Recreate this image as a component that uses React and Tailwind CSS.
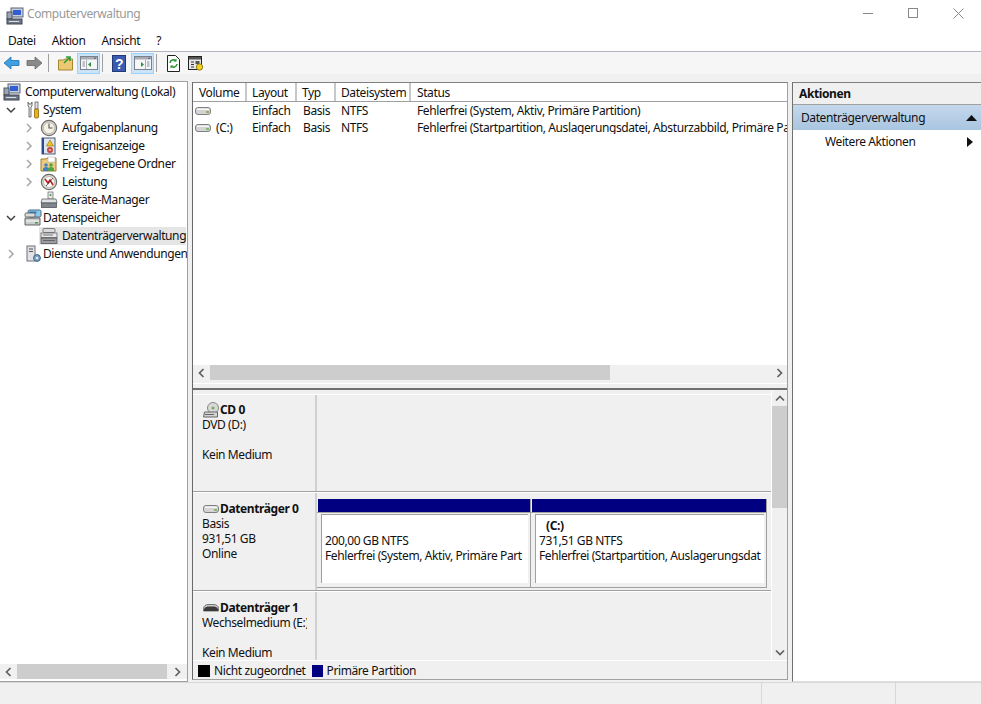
import React from "react";

const Chev = ({ down }) => (
  <svg width="10" height="10" viewBox="0 0 10 10" className="shrink-0">
    {down ? (
      <path d="M1 3l4 4 4-4" fill="none" stroke="#404040" strokeWidth="1.5" />
    ) : (
      <path d="M3 1l4 4-4 4" fill="none" stroke="#a6a6a6" strokeWidth="1.5" />
    )}
  </svg>
);

const CompIcon = () => (
  <svg width="18" height="18" viewBox="0 0 18 18">
    <rect x="5" y="1" width="12" height="9" fill="#c8d0dc" stroke="#5a6478" />
    <rect x="7" y="3" width="8" height="5" fill="#2f5fd0" />
    <rect x="1" y="5" width="5" height="7" fill="#9aa4b4" stroke="#4a5466" />
    <rect x="1" y="12" width="15" height="5" fill="#6e7886" stroke="#3c4450" />
    <path d="M3 14.5h10" stroke="#d8dce2" />
  </svg>
);
const ToolsIcon = () => (
  <svg width="18" height="18" viewBox="0 0 18 18">
    <path d="M4 1v4l1 1v10h2V6l1-1V1L7 3H5z" fill="#e6e6e6" stroke="#555" strokeWidth=".8" />
    <rect x="11" y="1" width="3" height="7" fill="#e0e0e0" stroke="#555" strokeWidth=".7" />
    <rect x="10.5" y="8" width="4" height="9" rx="1" fill="#eeb014" stroke="#7a5a00" strokeWidth=".7" />
  </svg>
);
const ClockIcon = () => (
  <svg width="18" height="18" viewBox="0 0 18 18">
    <circle cx="9" cy="9" r="7.6" fill="#d8d4c8" stroke="#707070" strokeWidth="1.2" />
    <circle cx="9" cy="9" r="5.6" fill="#f4f1e6" stroke="#a8a8a0" strokeWidth=".6" />
    <path d="M9 4.5V9h3.5" fill="none" stroke="#555" strokeWidth="1.1" />
  </svg>
);
const EventIcon = () => (
  <svg width="18" height="18" viewBox="0 0 18 18">
    <rect x="2" y="1" width="13" height="16" fill="#dfe5f0" stroke="#4a5878" />
    <path d="M3 1v16" stroke="#2c4a8c" strokeWidth="2" />
    <path d="M10 3l3.5 6h-7z" fill="#f2c420" stroke="#8a6a00" strokeWidth=".6" />
    <circle cx="10" cy="13" r="3" fill="#c8423c" />
    <path d="M8.8 13h2.4" stroke="#fff" />
  </svg>
);
const ShareIcon = () => (
  <svg width="18" height="18" viewBox="0 0 18 18">
    <path d="M1 4h5l1-1h9v13H1z" fill="#eccb7c" stroke="#a07c30" />
    <rect x="8" y="2" width="7" height="5" fill="#fff" stroke="#aaa" strokeWidth=".5" />
    <circle cx="6" cy="10" r="1.8" fill="#3f7fc4" />
    <path d="M3 16v-2c0-1 1-2 3-2s3 1 3 2v2z" fill="#3f7fc4" />
    <circle cx="11" cy="10" r="1.8" fill="#4ea24e" />
    <path d="M8 16v-2c0-1 1-2 3-2s3 1 3 2v2z" fill="#4ea24e" />
  </svg>
);
const PerfIcon = () => (
  <svg width="18" height="18" viewBox="0 0 18 18">
    <circle cx="9" cy="9" r="7.6" fill="#e2ddd0" stroke="#6c6c6c" strokeWidth="1.2" />
    <circle cx="9" cy="9" r="5.4" fill="#fff" stroke="#999" strokeWidth=".6" />
    <path d="M5 6l3 4 2-3 3 5" fill="none" stroke="#c4201c" strokeWidth="1.6" />
    <path d="M6 13l7-8" stroke="#333" strokeWidth=".8" />
  </svg>
);
const DevIcon = () => (
  <svg width="18" height="18" viewBox="0 0 18 18">
    <rect x="8" y="1" width="5" height="7" fill="#e8e8e8" stroke="#777" strokeWidth=".8" />
    <circle cx="10.5" cy="4" r="1" fill="#3d9a4a" />
    <path d="M2 8h14l1 4H1z" fill="#e0e2e4" stroke="#666" strokeWidth=".8" />
    <rect x="1.5" y="12" width="15" height="4.5" fill="#7e8690" stroke="#555" strokeWidth=".8" />
  </svg>
);
const StoreIcon = () => (
  <svg width="18" height="18" viewBox="0 0 18 18">
    <rect x="4" y="1" width="13" height="7" rx="1.5" fill="#8fc8e8" stroke="#4a6a80" />
    <rect x="5.5" y="2.5" width="7" height="2" fill="#2e7fc0" />
    <rect x="1" y="4" width="10" height="4" rx="1" fill="#d8dcdc" stroke="#555" strokeWidth=".8" />
    <path d="M1 9h15v7H1z" fill="#c9cdcb" stroke="#555" strokeWidth=".9" />
    <path d="M2 12h13" stroke="#fafafa" />
    <rect x="11" y="13" width="3" height="1.6" fill="#4ea24e" />
  </svg>
);
const DiskMgmtIcon = () => (
  <svg width="18" height="18" viewBox="0 0 18 18">
    <rect x="3" y="1.5" width="12" height="4" rx="1" fill="#dadada" stroke="#666" strokeWidth=".8" />
    <rect x="1" y="6" width="16" height="4.5" fill="#e8e8e8" stroke="#666" strokeWidth=".8" />
    <rect x="1" y="11" width="16" height="5.5" fill="#9a9ea2" stroke="#555" strokeWidth=".8" />
    <path d="M3 8h10M3 13.5h12" stroke="#555" strokeWidth=".8" />
  </svg>
);
const ServiceIcon = () => (
  <svg width="18" height="18" viewBox="0 0 18 18">
    <rect x="3" y="1" width="8" height="15" fill="#e0e2e6" stroke="#6c7078" />
    <path d="M5 4h4M5 6.5h4" stroke="#555" />
    <circle cx="13" cy="13" r="3.4" fill="#7da6cc" stroke="#3f5f80" />
    <circle cx="13" cy="13" r="1.1" fill="#fff" />
  </svg>
);

const Drive = ({ dark }) =>
  dark ? (
    <svg width="16" height="8" viewBox="0 0 16 8" className="shrink-0">
      <path d="M.5 7V4.5C.5 2 3 .5 5 .5h6c2 0 4.500 1.500 4.500 4V7z" fill="#c8c8c8" stroke="#777" />
      <path d="M1 7V5c1-2 3-2.500 5-2.500h4c2 0 4 .5 5 2.500v2z" fill="#3c3c3c" />
    </svg>
  ) : (
    <svg width="16" height="8" viewBox="0 0 16 8" className="shrink-0">
      <rect x=".5" y=".5" width="15" height="7" rx="2.500" fill="#d4d4d4" stroke="#808080" />
      <rect x="2" y="1.500" width="12" height="1.500" fill="#f4f4f4" />
      <rect x="11" y="4" width="3" height="2" fill="#8ab474" />
    </svg>
  );
const CdIcon = () => (
  <svg width="16" height="16" viewBox="0 0 16 16" className="shrink-0">
    <circle cx="10" cy="6" r="5.500" fill="#d8d8d8" stroke="#888" />
    <circle cx="10" cy="6" r="1.500" fill="#6fae5e" />
    <path d="M1.500 10h13v5H.5z" fill="#d4d4d4" stroke="#666" />
    <path d="M2 12.500h9" stroke="#666" />
  </svg>
);

const TreeRow = ({ depth, chev, icon, label, selected }) => {
  if (depth === 2) {
    return (
      <div className="flex h-[18px] items-center whitespace-nowrap">
        <div className="w-[39px] shrink-0 flex justify-end pr-[5px]">{chev ? <Chev /> : null}</div>
        <div className={selected ? "flex-1 h-full flex items-center bg-[#e5e5e5] pl-[1px] mr-[1px]" : "flex-1 h-full flex items-center pl-[1px]"}>
          <div className="w-[22px] shrink-0 flex">{icon}</div>
          <span>{label}</span>
        </div>
      </div>
    );
  }
  if (depth === 1) {
    return (
      <div className="flex h-[18px] items-center whitespace-nowrap pl-[6px]">
        <div className="w-[14px] shrink-0 flex">{chev === "down" ? <Chev down /> : <Chev />}</div>
        <div className="w-[4px] shrink-0" />
        <div className="w-[19px] shrink-0 flex">{icon}</div>
        <span>{label}</span>
      </div>
    );
  }
  return (
    <div className="flex h-[18px] items-center whitespace-nowrap pl-[3px]">
      <div className="w-[22px] shrink-0 flex">{icon}</div>
      <span>{label}</span>
    </div>
  );
};

const Hd = ({ w, children, pl }) => (
  <div className={`${w} h-full shrink-0 flex items-center pt-[1px] ${pl} border-r-2 border-[#c8c8c8]`}>{children}</div>
);

const VolRow = ({ vol, status }) => (
  <div className="flex h-[16.5px] items-center whitespace-nowrap">
    <div className="w-[59px] pl-[2px] shrink-0 flex items-center gap-[5px]"><Drive /><span>{vol}</span></div>
    <div className="w-[51px] shrink-0">Einfach</div>
    <div className="w-[38px] shrink-0">Basis</div>
    <div className="w-[76px] shrink-0">NTFS</div>
    <div className="flex-1 overflow-hidden">{status}</div>
  </div>
);

const Arrow = ({ dir }) => {
  const d = { l: "M6.500 1L2.500 5l4 4", r: "M3.500 1l4 4-4 4", u: "M1 6.500l4-4 4 4", d: "M1 3.500l4 4 4-4" }[dir];
  return (
    <svg width="10" height="10" viewBox="0 0 10 10"><path d={d} fill="none" stroke="#606060" strokeWidth="1.7" /></svg>
  );
};

const Partition = ({ w, bold, size, status }) => (
  <div className={`${w} shrink-0 h-[89px] border-r border-b border-[#a0a0a0] flex flex-col`}>
    <div className="h-[13px] bg-[#000080] shrink-0 ml-[1px]" />
    <div className="h-px bg-[#a0a0a0] shrink-0" />
    <div className="flex-1 pl-[4px] pt-[1px] pr-[2px]">
      <div className="h-[69px] bg-white border-l border-t border-[#a0a0a0] pl-[3px] leading-[15px] whitespace-nowrap overflow-hidden">
        <div className="h-[3px]" />
        <div className="h-[15px] pl-[7px] font-bold">{bold}</div>
        <div>{size}</div>
        <div>{status}</div>
      </div>
    </div>
  </div>
);

const DiskLabel = ({ icon, name, lines, top }) => (
  <div className={`w-[124px] shrink-0 pl-[9px] ${top} leading-[15px] whitespace-nowrap overflow-hidden border-r-2 border-[#d0d0d0] pr-[8px]`}>
    <div className="flex items-center h-[15px] font-bold ml-[1px]">{icon}<span className="ml-[1px]">{name}</span></div>
    {lines.map((l, i) => (
      <div key={i} className="h-[15px] overflow-hidden">{l}</div>
    ))}
  </div>
);

const Pressed = ({ children }) => (
  <div className="w-[23px] h-[21px] bg-[#cce4f7] border border-[#99d1ff] flex items-center justify-center">{children}</div>
);
const Sep = () => <div className="w-px h-[18px] bg-[#a0a0a0]" />;

const PaneBtn = ({ side }) => (
  <svg width="18" height="14" viewBox="0 0 18 14">
    <rect x=".5" y=".5" width="17" height="13" fill="#f4f6f8" stroke="#7c8088" />
    <rect x="1" y="1" width="16" height="2.500" fill="#a8acb4" />
    <path d="M14 2.200h2" stroke="#555" />
    {side === "l" ? (
      <>
        <path d="M6.500 4v9" stroke="#a8acb4" />
        <path d="M2.500 6h2.500M2.500 8h2.500M2.500 10h2.500" stroke="#8a9098" />
        <path d="M11 6v5l-3-2.500z" fill="#2f8f3a" />
      </>
    ) : (
      <>
        <path d="M11.500 4v9" stroke="#a8acb4" />
        <path d="M13 6h2.500M13 8h2.500M13 10h2.500" stroke="#8a9098" />
        <path d="M7 6v5l3-2.500z" fill="#2f8f3a" />
      </>
    )}
  </svg>
);

export default function App() {
  return (
    <div className="w-[981px] h-[704px] overflow-hidden bg-[#f0f0f0] flex flex-col text-[12px] tracking-[-0.4px] text-[#111] font-['Noto_Sans',sans-serif] leading-none">
      {/* title bar */}
      <div className="h-[31px] bg-white flex items-center shrink-0">
        <div className="pl-[6px] pr-[3px] flex"><CompIcon /></div>
        <span className="text-[#999] text-[12px] -mt-[3px]">Computerverwaltung</span>
        <div className="ml-auto flex items-center -mt-[5px] pr-[17px] gap-[35px]">
          <div className="w-[10px] h-px bg-[#888]" />
          <div className="w-[10px] h-[10px] border border-[#888]" />
          <svg width="11" height="11" viewBox="0 0 11 11"><path d="M.5.5l10 10M10.500.5l-10 10" stroke="#888" /></svg>
        </div>
      </div>
      {/* menu */}
      <div className="h-[21px] bg-white border-b border-[#b4b4bc] flex items-center pl-[8px] gap-[16px] shrink-0">
        <span>Datei</span><span>Aktion</span><span>Ansicht</span><span>?</span>
      </div>
      {/* toolbar */}
      <div className="h-[22px] bg-[#f6f6f7] flex items-center shrink-0 pl-[3px]">
        <svg width="17" height="14" viewBox="0 0 17 14"><path d="M8 1L1 7l7 6V9.500h8v-5H8z" fill="#3f9fe0" stroke="#1f6fb0" strokeWidth=".8" /></svg>
        <div className="w-[6px]" />
        <svg width="17" height="14" viewBox="0 0 17 14"><path d="M9 1l7 6-7 6V9.500H1v-5h8z" fill="#8a8a8a" stroke="#666" strokeWidth=".8" /></svg>
        <div className="w-[5px]" /><Sep /><div className="w-[9px]" />
        <svg width="15" height="16" viewBox="0 0 15 16"><path d="M.5 5h5l1-1h8v11H.5z" fill="#ecc870" stroke="#a68430" /><path d="M6 8l5-5M8 2h4v4" fill="none" stroke="#2e9a3a" strokeWidth="1.600" /></svg>
        <div className="w-[4px]" />
        <Pressed><PaneBtn side="l" /></Pressed>
        <div className="w-[2px]" /><Sep /><div className="w-[9px]" />
        <svg width="14" height="17" viewBox="0 0 14 17"><rect x=".5" y=".5" width="13" height="16" fill="#3a5bb0" stroke="#24397a" /><text x="7" y="13.500" textAnchor="middle" fontSize="14" fontWeight="700" fill="#fff" fontFamily="Liberation Sans">?</text></svg>
        <div className="w-[5px]" />
        <Pressed><PaneBtn side="r" /></Pressed>
        <div className="w-[2px]" /><Sep /><div className="w-[9px]" />
        <svg width="15" height="17" viewBox="0 0 15 17"><path d="M1.500.5h8l4 4v12h-12z" fill="#fff" stroke="#222" /><path d="M4 8a3.500 3.500 0 016-2M11 9a3.500 3.500 0 01-6 2" fill="none" stroke="#2e9a3a" strokeWidth="1.600" /><path d="M10.500 3.500v3h-3M4.500 13.500v-3h3" fill="#2e9a3a" /></svg>
        <div className="w-[7px]" />
        <svg width="16" height="17" viewBox="0 0 16 17"><rect x=".5" y="1.500" width="13" height="13" fill="#e8e8e8" stroke="#222" /><rect x="1" y="2" width="12" height="2.500" fill="#555" /><path d="M3 7h3M3 9.500h3M3 12h3" stroke="#333" /><rect x="7.500" y="6" width="4" height="3" fill="#555" /><circle cx="11.500" cy="12" r="3.200" fill="#f0d020" stroke="#7a6a00" strokeWidth=".8" /></svg>
      </div>
      <div className="h-[7px] shrink-0" />
      {/* main */}
      <div className="h-[601px] shrink-0 flex items-start">
        {/* tree */}
        <div className="w-[188px] h-[601px] shrink-0 border-t border-r border-b border-t-[#a0a0a0] border-r-[#a0a0a0] border-b-[#a0a0a0] bg-white flex flex-col">
          <div className="flex-1 overflow-hidden pt-[1px]">
            <TreeRow depth={0} icon={<CompIcon />} label="Computerverwaltung (Lokal)" />
            <TreeRow depth={1} chev="down" icon={<ToolsIcon />} label="System" />
            <TreeRow depth={2} chev icon={<ClockIcon />} label="Aufgabenplanung" />
            <TreeRow depth={2} chev icon={<EventIcon />} label="Ereignisanzeige" />
            <TreeRow depth={2} chev icon={<ShareIcon />} label="Freigegebene Ordner" />
            <TreeRow depth={2} chev icon={<PerfIcon />} label="Leistung" />
            <TreeRow depth={2} icon={<DevIcon />} label="Geräte-Manager" />
            <TreeRow depth={1} chev="down" icon={<StoreIcon />} label="Datenspeicher" />
            <TreeRow depth={2} icon={<DiskMgmtIcon />} label="Datenträgerverwaltung" selected />
            <TreeRow depth={1} chev="right" icon={<ServiceIcon />} label="Dienste und Anwendungen" />
          </div>
          <div className="h-[15px] shrink-0 bg-[#f0f0f0] flex items-center mb-[2px]">
            <div className="w-[17px] flex justify-center"><Arrow dir="l" /></div>
            <div className="w-[150px] h-full bg-[#cdcdcd]" />
            <div className="w-[19px] flex justify-center"><Arrow dir="r" /></div>
          </div>
        </div>
        <div className="w-[4px] shrink-0" />
        {/* center */}
        <div className="w-[596px] h-[598px] mt-[1px] shrink-0 border-l border-r border-t border-b border-l-[#696969] border-r-[#a0a0a0] border-t-[#808080] border-b-[#a0a0a0] flex flex-col">
          <div className="h-[304px] shrink-0 bg-white flex flex-col">
            <div className="h-[19px] shrink-0 flex items-center bg-white border-b border-[#a0a0a0]">
              <Hd w="w-[54px]" pl="pl-[6px]">Volume</Hd>
              <Hd w="w-[50px]" pl="pl-[5px]">Layout</Hd>
              <Hd w="w-[39px]" pl="pl-[5px]">Typ</Hd>
              <Hd w="w-[75px]" pl="pl-[5px]">Dateisystem</Hd>
              <div className="flex-1 h-full flex items-center pt-[1px] pl-[6px]">Status</div>
            </div>
            <div className="flex-1 overflow-hidden pt-[1px]">
              <VolRow vol="" status="Fehlerfrei (System, Aktiv, Primäre Partition)" />
              <VolRow vol="(C:)" status="Fehlerfrei (Startpartition, Auslagerungsdatei, Absturzabbild, Primäre Partition)" />
            </div>
            <div className="h-[15px] bg-[#f0f0f0] shrink-0 flex items-center">
              <div className="w-[17px] flex justify-center"><Arrow dir="l" /></div>
              <div className="w-[400px] h-[15px] bg-[#cdcdcd]" />
              <div className="flex-1 flex justify-end pr-[3px]"><Arrow dir="r" /></div>
            </div>
            <div className="h-[7px] shrink-0 bg-[#f0f0f0] pt-[3px]"><div className="h-px bg-white" /></div>
          </div>
          <div className="h-[3px] shrink-0 bg-[#f0f0f0] border-b-2 border-[#707070]" />
          <div className="h-[270px] shrink-0 flex bg-[#f0f0f0]">
            <div className="flex-1 overflow-hidden flex flex-col pt-[4px]">
              <div className="h-[98px] shrink-0 flex border-b border-[#a0a0a0] border-t border-t-white">
                <DiskLabel top="pt-[7px]" icon={<CdIcon />} name="CD 0" lines={["DVD (D:)", "", "Kein Medium"]} />
                <div className="flex-1" />
              </div>
              <div className="h-[99px] shrink-0 flex border-b border-[#a0a0a0] border-t border-t-white">
                <DiskLabel top="pt-[8px]" icon={<Drive />} name="Datenträger 0" lines={["Basis", "931,51 GB", "Online"]} />
                <div className="flex-1 flex items-start pt-[6px]">
                  <Partition w="w-[214px]" bold="" size="200,00 GB NTFS" status="Fehlerfrei (System, Aktiv, Primäre Part" />
                  <Partition w="w-[236px]" bold="(C:)" size="731,51 GB NTFS" status="Fehlerfrei (Startpartition, Auslagerungsdat" />
                </div>
              </div>
              <div className="flex-1 flex border-t border-t-white overflow-hidden">
                <DiskLabel top="pt-[8px]" icon={<Drive dark />} name="Datenträger 1" lines={["Wechselmedium (E:)", "", "Kein Medium"]} />
                <div className="flex-1" />
              </div>
            </div>
            <div className="w-[16px] shrink-0 flex flex-col items-center bg-[#f0f0f0] border-l border-white">
              <div className="h-[16px] flex items-center pt-[2px]"><Arrow dir="u" /></div>
              <div className="w-full h-[102px] bg-[#cdcdcd]" />
              <div className="flex-1" />
              <div className="h-[16px] flex items-center"><Arrow dir="d" /></div>
            </div>
          </div>
          <div className="flex-1 bg-[#f0f0f0] border-t border-white flex items-center pl-[5px] pt-[1px]">
            <div className="w-[12px] h-[12px] bg-black" />
            <span className="ml-[4px]">Nicht zugeordnet</span>
            <div className="w-[11px] h-[12px] bg-[#000080] ml-[6px]" />
            <span className="ml-[4px]">Primäre Partition</span>
          </div>
        </div>
        <div className="w-[4px] shrink-0" />
        {/* actions */}
        <div className="flex-1 h-[600px] mt-[1px] border-l border-t border-b border-l-[#707070] border-t-[#808080] border-b-[#e0e0e0] bg-white flex flex-col">
          <div className="h-[22px] shrink-0 bg-[#f0f0f0] flex items-center pl-[6px] font-bold border-b border-[#a0a0a0]">Aktionen</div>
          <div className="h-[25px] shrink-0 bg-gradient-to-b from-[#c4d8ec] to-[#a9c5e0] flex items-center pl-[8px] pr-[4px]">
            <span>Datenträgerverwaltung</span>
            <svg className="ml-auto" width="11" height="6" viewBox="0 0 11 6"><path d="M5.500 0L11 6H0z" fill="#111" /></svg>
          </div>
          <div className="h-[24px] flex items-center pl-[32px] pr-[8px]">
            <span>Weitere Aktionen</span>
            <svg className="ml-auto" width="6" height="10" viewBox="0 0 6 10"><path d="M0 0l6 5-6 5z" fill="#111" /></svg>
          </div>
        </div>
      </div>
      {/* status */}
      <div className="flex-1 flex border-t border-[#d8d8d8]">
        <div className="w-[762px] border-r border-[#d8d8d8]" />
        <div className="w-[134px] border-r border-[#d8d8d8]" />
      </div>
    </div>
  );
}
